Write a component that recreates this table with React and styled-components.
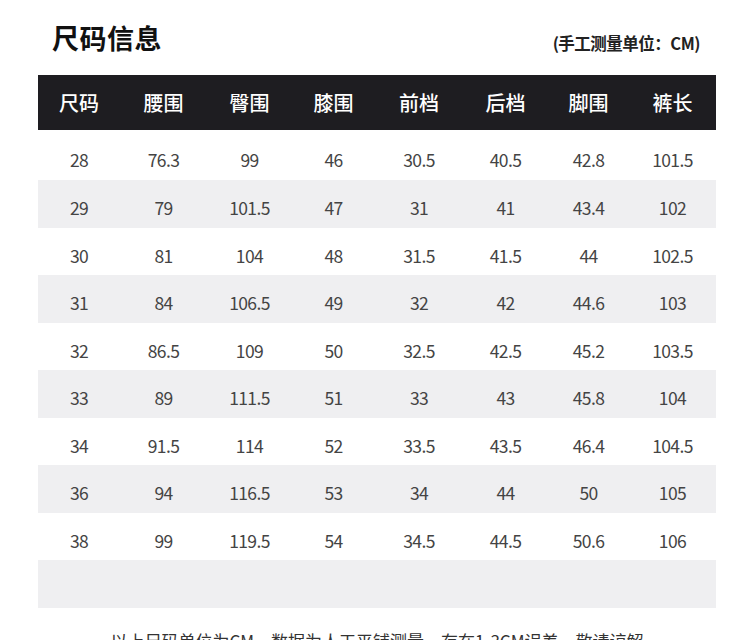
import styled, { createGlobalStyle } from 'styled-components';

const GlobalStyle = createGlobalStyle`
  body {
    margin: 0;
    background: #ffffff;
    font-family: "Noto Sans CJK SC", "Noto Sans", sans-serif;
  }
`;

const Page = styled.div`
  width: 750px;
  padding: 0 34px 0 38px;
  box-sizing: border-box;
`;

const TitleRow = styled.div`
  height: 75px;
  display: flex;
  align-items: center;
  justify-content: space-between;
  padding: 0 16px 0 14px;
  box-sizing: border-box;
`;

const Title = styled.h1`
  margin: 0;
  font-size: 27px;
  font-weight: 700;
  color: #111;
  letter-spacing: 0.5px;
`;

const Unit = styled.span`
  margin-top: 10px;
  font-size: 16.5px;
  font-weight: 700;
  color: #222;
  letter-spacing: -0.5px;
`;

const columns = '82px 87px 85px 83px 88px 85px 81px 87px';

const HeadRow = styled.div`
  display: grid;
  grid-template-columns: ${columns};
  height: 55px;
  align-items: center;
  background: #1e1d21;
`;

const HeadCell = styled.div`
  text-align: center;
  color: #ffffff;
  font-size: 20px;
  font-weight: 500;
`;

const Row = styled.div`
  display: grid;
  grid-template-columns: ${columns};
  height: ${({ $first }) => ($first ? '50px' : '47.5px')};
  padding-top: 8px;
  box-sizing: border-box;
  align-items: center;
  background: ${({ $shade }) => ($shade ? '#efeff1' : '#ffffff')};
`;

const Cell = styled.div`
  text-align: center;
  font-size: 17.5px;
  color: #444;
  font-family: "Noto Sans CJK SC", "Noto Sans", sans-serif;
  font-weight: 400;
  letter-spacing: -0.6px;
`;

const Note = styled.p`
  margin: 20px 0 0;
  text-align: center;
  font-size: 17px;
  color: #333;
`;

const heads = ['尺码', '腰围', '臀围', '膝围', '前档', '后档', '脚围', '裤长'];

const rows = [
  ['28', '76.3', '99', '46', '30.5', '40.5', '42.8', '101.5'],
  ['29', '79', '101.5', '47', '31', '41', '43.4', '102'],
  ['30', '81', '104', '48', '31.5', '41.5', '44', '102.5'],
  ['31', '84', '106.5', '49', '32', '42', '44.6', '103'],
  ['32', '86.5', '109', '50', '32.5', '42.5', '45.2', '103.5'],
  ['33', '89', '111.5', '51', '33', '43', '45.8', '104'],
  ['34', '91.5', '114', '52', '33.5', '43.5', '46.4', '104.5'],
  ['36', '94', '116.5', '53', '34', '44', '50', '105'],
  ['38', '99', '119.5', '54', '34.5', '44.5', '50.6', '106'],
];

export default function App() {
  return (
    <Page>
      <GlobalStyle />
      <TitleRow>
        <Title>尺码信息</Title>
        <Unit>(手工测量单位：CM)</Unit>
      </TitleRow>
      <HeadRow>
        {heads.map(h => <HeadCell key={h}>{h}</HeadCell>)}
      </HeadRow>
      {rows.map((r, i) => (
        <Row key={r[0]} $shade={i % 2 === 1} $first={i === 0}>
          {r.map((v, j) => <Cell key={j}>{v}</Cell>)}
        </Row>
      ))}
      <Row $shade />
      <Note>以上尺码单位为CM，数据为人工平铺测量，存在1-3CM误差，敬请谅解</Note>
    </Page>
  );
}
